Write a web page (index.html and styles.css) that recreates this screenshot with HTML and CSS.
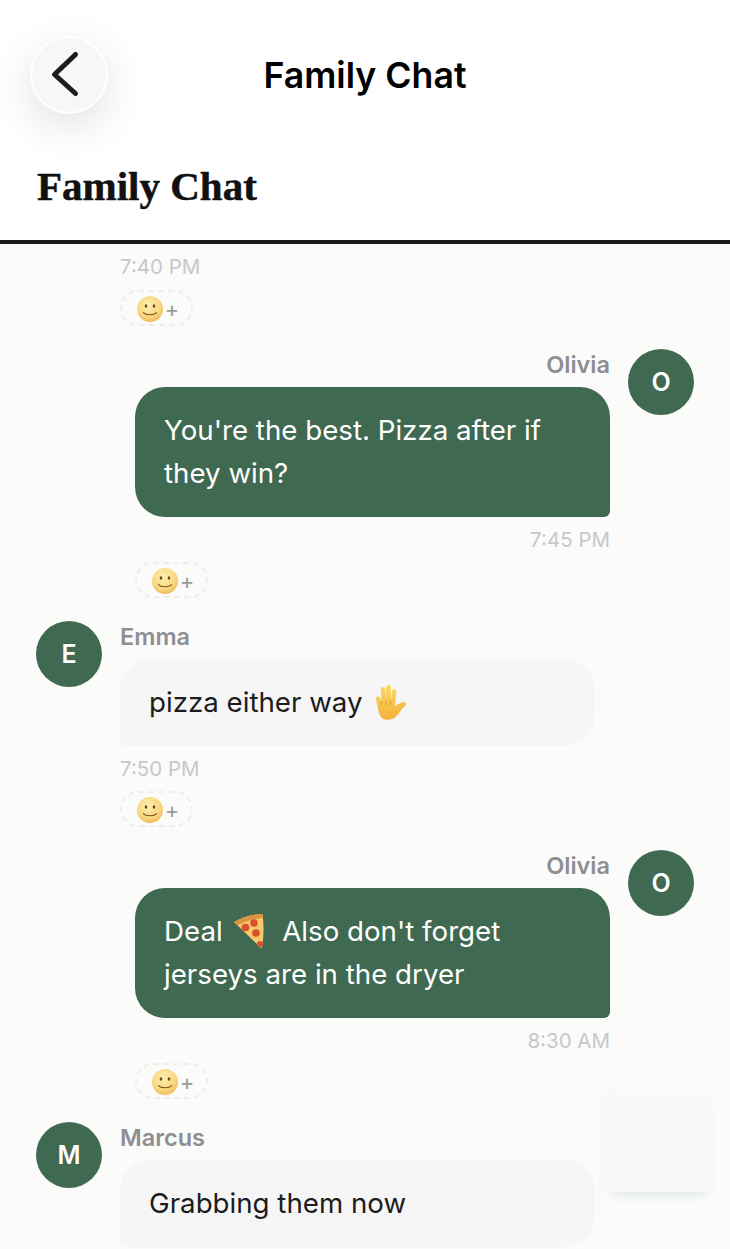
FILE: index.html
```html
<!DOCTYPE html>
<html lang="en">
<head>
    <meta charset="UTF-8" />
    <meta name="viewport" content="width=device-width, initial-scale=1.0"/>
    <title>Family Chat</title>
    <link rel="stylesheet" href="styles.css">
</head>
<body>
    <svg class="icon-defs" aria-hidden="true">
        <defs>
            <radialGradient id="smileFill" cx="45%" cy="35%" r="70%">
                <stop offset="0%" stop-color="#fdeeb0"/>
                <stop offset="65%" stop-color="#f9d77e"/>
                <stop offset="100%" stop-color="#eeb455"/>
            </radialGradient>
            <linearGradient id="handFill" x1="0" y1="0" x2="0" y2="1">
                <stop offset="0%" stop-color="#fcd865"/>
                <stop offset="100%" stop-color="#f3b23a"/>
            </linearGradient>
            <symbol id="smile" viewBox="0 0 26 26">
                <circle cx="13" cy="13" r="13" fill="url(#smileFill)"/>
                <ellipse cx="9" cy="10" rx="1.3" ry="1.7" fill="#6b4a1e"/>
                <ellipse cx="17" cy="10" rx="1.3" ry="1.7" fill="#6b4a1e"/>
                <path d="M6.500 16.500c2 3 11 3 13 0" fill="none" stroke="#7a5522" stroke-width="1.200" stroke-linecap="round"/>
            </symbol>
        </defs>
    </svg>

    <div class="app">
        <header class="header">
            <div class="topbar">
                <button class="back-btn" aria-label="Back">
                    <svg width="78" height="78" viewBox="0 0 78 78">
                        <path d="M45.500 18.500 L24.500 38.500 L45.500 57.500" fill="none" stroke="#1c1c1e" stroke-width="5" stroke-linecap="round" stroke-linejoin="round"/>
                    </svg>
                </button>
                <div class="topbar-title">Family Chat</div>
            </div>
            <h1 class="page-title">Family Chat</h1>
        </header>

        <main class="messages">
            <div class="msg">
                <div class="msg-spacer"></div>
                <div class="msg-body">
                    <div class="time">7:40 PM</div>
                    <div class="reaction"><svg class="smile"><use href="#smile"/></svg><span class="plus">+</span></div>
                </div>
            </div>

            <div class="msg mine">
                <div class="avatar">O</div>
                <div class="msg-body">
                    <div class="name">Olivia</div>
                    <div class="bubble">You're the best. Pizza after if<br>they win?</div>
                    <div class="time">7:45 PM</div>
                    <div class="reaction"><svg class="smile"><use href="#smile"/></svg><span class="plus">+</span></div>
                </div>
            </div>

            <div class="msg">
                <div class="avatar">E</div>
                <div class="msg-body">
                    <div class="name">Emma</div>
                    <div class="bubble">pizza either way
                        <svg class="emoji hand" viewBox="15 8 33 36">
                            <path d="M18.500 35 C17.500 30 16.500 26 16 23 C15.500 20 19.500 19.500 20.200 22.500 L21.300 26 L20.800 13.500 C20.700 10 25.300 10 25.500 13.500 L26.100 25 L26.200 11.500 C26.200 8 31 8 31 11.500 L30.800 25 L32 15 C32.400 12 36.800 12.400 36.400 15.600 L35 30 C37 29 39.500 27 42 26.200 C45.500 25.200 47.500 27.600 45.500 29.500 C42 32.500 40 36 37 39.500 C34.500 42.500 31.500 43.800 27.500 43.800 C22.500 43.800 20 41 18.500 35 Z" fill="url(#handFill)"/>
                            <path d="M21.300 26 L21.600 29 M26.100 25 L26.200 28.500 M30.800 25 L30.600 28.500" stroke="#d9992f" stroke-width="0.900" stroke-linecap="round"/>
                        </svg>
                    </div>
                    <div class="time">7:50 PM</div>
                    <div class="reaction"><svg class="smile"><use href="#smile"/></svg><span class="plus">+</span></div>
                </div>
            </div>

            <div class="msg mine">
                <div class="avatar">O</div>
                <div class="msg-body">
                    <div class="name">Olivia</div>
                    <div class="bubble">Deal
                        <svg class="emoji pizza" viewBox="0 0 31 36">
                            <path d="M1 9 C9 4 20 1 29.500 1 C31 12 31 25 28.500 35.500 Z" fill="#f5c96a"/>
                            <path d="M1 9 C9 4 20 1 29.500 1 L30 5 C21 5.500 12 8.500 4.500 12.500 Z" fill="#dd9440"/>
                            <circle cx="21" cy="10" r="3.800" fill="#d9502e"/>
                            <circle cx="12.500" cy="14.500" r="3.800" fill="#d9502e"/>
                            <circle cx="23" cy="20" r="3.800" fill="#d9502e"/>
                            <circle cx="27" cy="31" r="3" fill="#d9502e"/>
                        </svg>
                        Also don't forget<br>jerseys are in the dryer</div>
                    <div class="time">8:30 AM</div>
                    <div class="reaction"><svg class="smile"><use href="#smile"/></svg><span class="plus">+</span></div>
                </div>
            </div>

            <div class="msg">
                <div class="avatar">M</div>
                <div class="msg-body">
                    <div class="name">Marcus</div>
                    <div class="bubble">Grabbing them now</div>
                </div>
            </div>
        </main>

        <div class="float-box"></div>
    </div>
</body>
</html>
```

FILE: styles.css
```css
* {
    box-sizing: border-box;
}
body {
    margin: 0;
    padding: 0;
    font-family: Inter, 'Liberation Sans', sans-serif;
    background-color: #fbfbf9;
    color: #1c1c1e;
}
.icon-defs {
    position: absolute;
    width: 0;
    height: 0;
}
.app {
    position: relative;
    height: 1249px;
    overflow: hidden;
}
.header {
    height: 244px;
    background-color: #fff;
    border-bottom: 4px solid #1a1a1a;
    padding: 36px 0 0 30px;
}
.topbar {
    position: relative;
    height: 78px;
}
.back-btn {
    display: block;
    width: 78px;
    height: 78px;
    padding: 0;
    margin: 0;
    border: 2px solid #fff;
    border-radius: 50%;
    background-color: #f7f7f7;
    box-shadow: 0 12px 44px rgba(0, 0, 0, 0.12);
}
.back-btn svg {
    display: block;
    margin: -2px;
}
.topbar-title {
    position: absolute;
    top: 0;
    left: -30px;
    width: 730px;
    text-align: center;
    font-size: 35.700px;
    font-weight: 600;
    line-height: 78px;
    color: #000;
}
.page-title {
    margin: 47px 0 0 7px;
    font-family: 'Liberation Serif', serif;
    font-size: 41px;
    font-weight: 700;
    line-height: 50px;
    color: #111;
    -webkit-text-stroke: 0.500px #111;
}
.messages {
    padding: 12px 36px 0;
}
.msg {
    display: flex;
    gap: 18px;
    margin-bottom: 23px;
}
.msg.mine {
    flex-direction: row-reverse;
}
.msg-spacer,
.avatar {
    flex: 0 0 66px;
}
.avatar {
    height: 66px;
    border-radius: 50%;
    background-color: #3f6950;
    color: #fff;
    font-size: 25px;
    font-weight: 600;
    line-height: 66px;
    text-align: center;
}
.msg-body {
    width: 475px;
}
.name {
    height: 22px;
    margin: 5px 0 11px;
    font-size: 23.500px;
    font-weight: 600;
    line-height: 22px;
    color: #8e8e93;
}
.bubble {
    padding: 22px 29px;
    border-radius: 30px 30px 30px 6px;
    background-color: #f6f6f6;
    font-size: 27.700px;
    line-height: 43px;
    color: #1c1c1e;
}
.time {
    height: 22px;
    margin: 12px 0 11px;
    font-size: 20.500px;
    line-height: 22px;
    color: #c7c7cc;
}
.msg:first-child .time {
    margin: 0 0 12px;
}
.reaction {
    display: flex;
    align-items: center;
    justify-content: center;
    gap: 2px;
    width: 73px;
    height: 36px;
    border: 2px dashed #eeeeee;
    border-radius: 18px;
    padding: 1px 0 0 3px;
}
.smile {
    width: 26px;
    height: 26px;
}
.plus {
    font-size: 22px;
    line-height: 26px;
    color: #9a9a9a;
}
.mine .name,
.mine .time {
    text-align: right;
}
.mine .bubble {
    background-color: #3f6950;
    border-radius: 30px 30px 6px 30px;
    color: #fff;
}
.emoji {
    display: inline-block;
    vertical-align: middle;
}
.hand {
    width: 33px;
    height: 36px;
    margin: -8px 0 -4px 5px;
}
.pizza {
    width: 31px;
    height: 36px;
    margin: -8px 10px -4px 3px;
}
.float-box {
    position: absolute;
    left: 604px;
    top: 1093px;
    width: 109px;
    height: 99px;
    border-radius: 10px;
    background-color: #f9f9f8;
    box-shadow: 0 10px 12px -8px rgba(110, 150, 180, 0.2), -2px 0 8px rgba(110, 150, 180, 0.05);
}
```
